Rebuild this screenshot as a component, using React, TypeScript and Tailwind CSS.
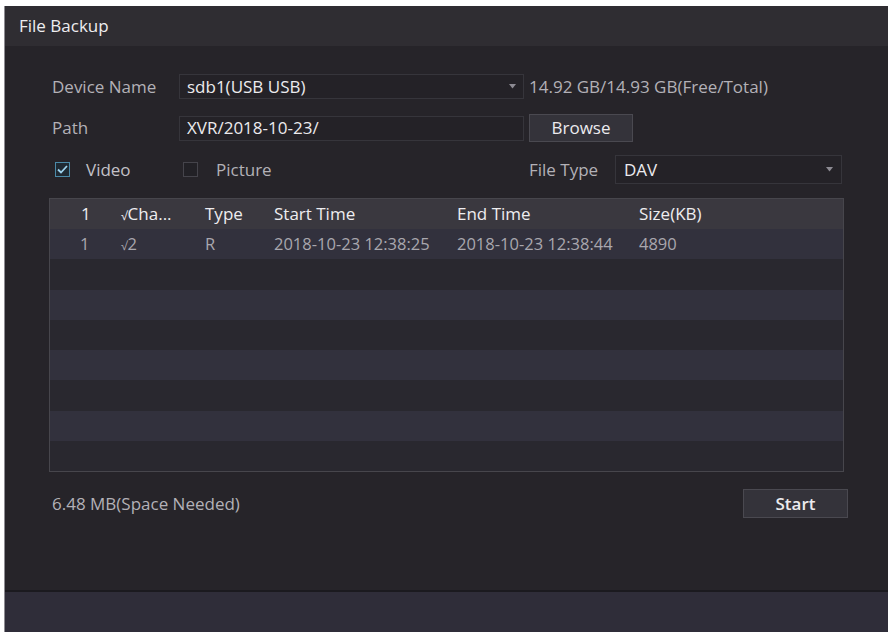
const rows = [
  { idx: "1", ch: "2", type: "R", start: "2018-10-23 12:38:25", end: "2018-10-23 12:38:44", size: "4890" },
];

const cols = "grid grid-cols-[70px_85px_69px_183px_182px_1fr] items-center";

function Check({ checked }: { checked?: boolean }) {
  return checked ? (
    <span className="flex h-[15px] w-[15px] items-center justify-center border border-[#4b8aa8] bg-[#1f2a33]">
      <svg width="11" height="9" viewBox="0 0 11 9">
        <path d="M1 4.5 L4 7.5 L10 1" fill="none" stroke="#9fd3ee" strokeWidth="1.8" />
      </svg>
    </span>
  ) : (
    <span className="h-[15px] w-[15px] border border-[#45444b] bg-[#222126]" />
  );
}

function Arrow() {
  return (
    <svg width="7" height="5" viewBox="0 0 7 5">
      <path d="M0 0 L7 0 L3.5 4.5 Z" fill="#8d8b93" />
    </svg>
  );
}

export default function App() {
  return (
    <div
      className="h-[634px] w-[892px] overflow-hidden bg-white pl-[4px] pt-[6px]"
      style={{ fontFamily: '"Open Sans", "Noto Sans", sans-serif' }}
    >
      <div className="flex h-[626px] w-[884px] flex-col border-l border-[#8e8c92] bg-[#262429]">
        <div className="flex h-[40px] items-center bg-[#2f2d32] pl-[14px] text-[17px] text-[#eeedf0]">
          File Backup
        </div>

        <div className="flex flex-1 flex-col pl-[44px] pr-[40px] pt-[28px]">
          <div className="flex h-[25px] items-center text-[17px]">
            <span className="w-[130px] pl-[3px] text-[#b3b1b7]">Device Name</span>
            <div className="flex h-[25px] w-[345px] items-center justify-between border border-[#36353b] bg-[#242227] pl-[7px] pr-[7px] text-[#ecebee]">
              <span>sdb1(USB USB)</span>
              <Arrow />
            </div>
            <span className="pl-[5px] text-[#b3b1b7]">14.92 GB/14.93 GB(Free/Total)</span>
          </div>

          <div className="mt-[15px] flex h-[28px] items-center text-[17px]">
            <span className="w-[130px] pl-[3px] text-[#b3b1b7]">Path</span>
            <div className="flex h-[25px] w-[345px] items-center border border-[#36353b] bg-[#242227] pl-[7px] text-[#ecebee]">
              XVR/2018-10-23/
            </div>
            <button className="ml-[5px] flex h-[28px] w-[104px] items-center justify-center border border-[#4a4950] bg-[#34333a] text-[#ecebee]">
              Browse
            </button>
          </div>

          <div className="mt-[13px] flex h-[29px] items-center text-[17px]">
            <div className="flex w-[130px] items-center pl-[6px]">
              <Check checked />
              <span className="ml-[16px] text-[#c3c1c7]">Video</span>
            </div>
            <div className="flex w-[345px] items-center pl-[4px]">
              <Check />
              <span className="ml-[18px] text-[#b3b1b7]">Picture</span>
            </div>
            <span className="w-[91px] pl-[5px] text-[#b3b1b7]">File Type</span>
            <div className="flex h-[29px] w-[227px] items-center justify-between border border-[#36353b] bg-[#242227] pl-[8px] pr-[8px] text-[#ecebee]">
              <span>DAV</span>
              <Arrow />
            </div>
          </div>

          <div className="mt-[14px] h-[274px] w-[795px] border border-[#47464c] bg-[#29282f]">
            <div className={`${cols} h-[30px] bg-[#3a383f] text-[17px] text-[#eeedf0]`}>
              <span className="pl-[31px]">1</span>
              <span className="pl-[1px]"><span className="text-[12px]">√</span>Cha...</span>
              <span>Type</span>
              <span>Start Time</span>
              <span>End Time</span>
              <span>Size(KB)</span>
            </div>
            {Array.from({ length: 8 }).map((_, i) => {
              const r = rows[i];
              return (
                <div
                  key={i}
                  className={`${cols} h-[30.3px] text-[16.5px] text-[#a9a7ae] ${i % 2 === 0 ? "bg-[#32313d]" : "bg-[#29282f]"}`}
                >
                  {r ? (
                    <>
                      <span className="pl-[30px]">{r.idx}</span>
                      <span className="pl-[1px]"><span className="text-[12px]">√</span>{r.ch}</span>
                      <span>{r.type}</span>
                      <span>{r.start}</span>
                      <span>{r.end}</span>
                      <span>{r.size}</span>
                    </>
                  ) : null}
                </div>
              );
            })}
          </div>

          <div className="mt-[17px] flex items-center justify-between">
            <span className="pl-[3px] text-[17px] text-[#b3b1b7]">6.48 MB(Space Needed)</span>
            <button className="flex h-[29px] w-[105px] items-center justify-center border border-[#4a4950] bg-[#34333a] text-[17px] font-semibold text-[#ecebee]">
              Start
            </button>
          </div>
        </div>

        <div className="h-[42px] border-t-2 border-[#1b1a1f] bg-[#2f2d39]" />
      </div>
    </div>
  );
}
